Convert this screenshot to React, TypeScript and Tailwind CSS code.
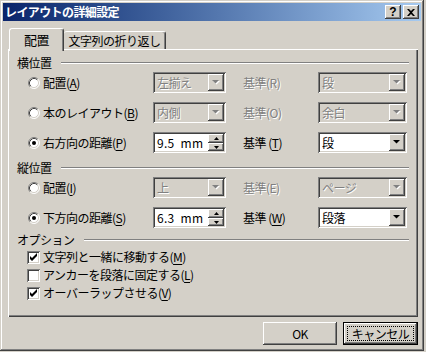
import React from "react";

const RAISED =
  "shadow-[inset_-1px_-1px_#404040,inset_1px_1px_#ffffff,inset_-2px_-2px_#808080,inset_2px_2px_#d4d0c8]";
const SUNKEN =
  "shadow-[inset_1px_1px_#808080,inset_-1px_-1px_#ffffff,inset_2px_2px_#404040,inset_-2px_-2px_#d4d0c8]";
const DIS = "text-[#808080] [text-shadow:1px_1px_0_#ffffff]";

function U({ c }: { c: string }) {
  return <span className="underline underline-offset-[2px] decoration-1">{c}</span>;
}

function Arrow({ disabled }: { disabled?: boolean }) {
  return (
    <svg width="8" height="5" viewBox="0 0 8 5" className="block">
      {disabled && <path d="M1 1h7L4.5 4.5z" fill="#ffffff" />}
      <path d="M0 0h7L3.5 3.5z" fill={disabled ? "#808080" : "#000000"} />
    </svg>
  );
}

function Combo({ value, disabled, w }: { value: string; disabled?: boolean; w: string }) {
  return (
    <div className={`relative h-[21px] ${w} ${disabled ? "bg-[#d4d0c8]" : "bg-white"} ${SUNKEN} flex items-center`}>
      <span className={`pl-[4px] leading-none ${disabled ? DIS : "text-black"}`}>{value}</span>
      <div className={`absolute right-[2px] top-[2px] w-[16px] h-[17px] bg-[#d4d0c8] ${RAISED} flex items-center justify-center`}>
        <Arrow disabled={disabled} />
      </div>
    </div>
  );
}

function Spin({ value }: { value: string }) {
  return (
    <div className={`relative h-[21px] w-[73px] bg-white ${SUNKEN} flex items-center`}>
      <span className="pl-[4px] leading-none text-black tracking-[0.3px] whitespace-pre">{value}</span>
      <div className="absolute right-[2px] top-[2px] w-[16px] h-[17px] flex flex-col">
        <div className={`h-[9px] bg-[#d4d0c8] ${RAISED} flex items-center justify-center`}>
          <svg width="5" height="3" viewBox="0 0 5 3" className="block">
            <path d="M2.5 0L5 3H0z" fill="#000" />
          </svg>
        </div>
        <div className={`h-[8px] bg-[#d4d0c8] ${RAISED} flex items-center justify-center`}>
          <svg width="5" height="3" viewBox="0 0 5 3" className="block">
            <path d="M0 0h5L2.5 3z" fill="#000" />
          </svg>
        </div>
      </div>
    </div>
  );
}

function Radio({ checked }: { checked?: boolean }) {
  return (
    <svg width="12" height="12" viewBox="0 0 12 12" className="block shrink-0">
      <circle cx="6" cy="6" r="5" fill="#ffffff" />
      <path d="M2.11 9.89A5.5 5.5 0 0 1 9.89 2.11" stroke="#808080" fill="none" />
      <path d="M9.89 2.11A5.5 5.5 0 0 1 2.11 9.89" stroke="#ffffff" fill="none" />
      <path d="M2.82 9.18A4.5 4.5 0 0 1 9.18 2.82" stroke="#404040" fill="none" />
      <path d="M9.18 2.82A4.5 4.5 0 0 1 2.82 9.18" stroke="#d4d0c8" fill="none" />
      {checked && <circle cx="6" cy="6" r="2" fill="#000000" />}
    </svg>
  );
}

function Check({ checked }: { checked?: boolean }) {
  return (
    <div className={`w-[13px] h-[13px] bg-white ${SUNKEN} shrink-0 relative`}>
      {checked && (
        <svg width="13" height="13" viewBox="0 0 13 13" className="absolute inset-0">
          <path d="M3 5v3l2 2 5-5V2L5 7z" fill="#000" />
        </svg>
      )}
    </div>
  );
}

function Header({ text }: { text: string }) {
  return (
    <div className="flex items-center h-[14px] pl-[9px] pr-[9px]">
      <span className="leading-none">{text}</span>
      <div className="flex-1 ml-[9px] h-[2px] border-t border-t-[#808080] border-b border-b-white" />
    </div>
  );
}

function Row({
  radioChecked,
  label,
  field,
  refLabel,
  refDisabled,
  combo,
}: {
  radioChecked?: boolean;
  label: React.ReactNode;
  field: React.ReactNode;
  refLabel: React.ReactNode;
  refDisabled?: boolean;
  combo: React.ReactNode;
}) {
  return (
    <div className="flex items-center h-[21px]">
      <div className="w-[145px] pl-[20px] flex items-center gap-[3px]">
        <Radio checked={radioChecked} />
        <span className="leading-none">{label}</span>
      </div>
      {field}
      <div className={`w-[92px] pl-[17px] leading-none ${refDisabled ? DIS : ""}`}>{refLabel}</div>
      {combo}
    </div>
  );
}

export default function App() {
  return (
    <div className="w-[426px] h-[352px] bg-[#d4d0c8] font-['Noto_Sans_CJK_JP',sans-serif] text-[12px] text-black tracking-[-0.5px]">
      <div className="w-[424px] h-[351px] bg-[#d4d0c8] shadow-[inset_-1px_-1px_#404040,inset_1px_1px_#d4d0c8,inset_-2px_-2px_#808080,inset_2px_2px_#ffffff] pt-[3px] flex flex-col">
        {/* title bar */}
        <div className="mx-[3px] h-[18px] bg-gradient-to-r from-[#0a246a] to-[#a6caf0] flex items-center pl-[2px] pr-[2px]">
          <span className="text-white font-bold leading-none text-[12px] tracking-[-0.6px]">レイアウトの詳細設定</span>
          <div className="ml-auto flex items-center">
            <div className={`w-[16px] h-[14px] bg-[#d4d0c8] ${RAISED} flex items-center justify-center`}>
              <span className="font-['Liberation_Sans'] font-bold text-[12px] leading-none tracking-normal text-black">?</span>
            </div>
            <div className={`ml-[2px] w-[16px] h-[14px] bg-[#d4d0c8] ${RAISED} flex items-center justify-center`}>
              <svg width="8" height="7" viewBox="0 0 8 7" className="block">
                <path d="M0 0h2l2 2 2-2h2L5 3.5 8 7H6L4 5 2 7H0l3-3.5z" fill="#000" />
              </svg>
            </div>
          </div>
        </div>

        {/* tabs + panel */}
        <div className="ml-[8px] mt-[7px] w-[410px] flex flex-col">
          <div className="h-[21px] flex items-start pl-[1px] relative z-10">
            <div className="h-[23px] w-[55px] bg-[#d4d0c8] rounded-t-[3px] border-l border-t border-l-white border-t-white border-r border-r-[#404040] shadow-[inset_-1px_0_#808080] flex items-start justify-center pt-[4px]">
              <span className="leading-none text-[13px]">配置</span>
            </div>
            <div className="mt-[3px] h-[18px] w-[102px] bg-[#d4d0c8] rounded-t-[3px] border-t border-t-white border-r border-r-[#404040] shadow-[inset_-1px_0_#808080] flex items-start justify-center pt-[3px]">
              <span className="leading-none">文字列の折り返し</span>
            </div>
          </div>
          <div className="h-[268px] shadow-[inset_1px_1px_#ffffff,inset_-1px_-1px_#404040,inset_-2px_-2px_#808080] flex flex-col pt-[7px]">
            <Header text="横位置" />
            <div className="mt-[2px]">
              <Row
                label={<>配置(<U c="A" />)</>}
                field={<Combo value="左揃え" disabled w="w-[73px]" />}
                refLabel="基準(R)"
                refDisabled
                combo={<Combo value="段" disabled w="w-[89px]" />}
              />
            </div>
            <div className="mt-[9px]">
              <Row
                label={<>本のレイアウト(<U c="B" />)</>}
                field={<Combo value="内側" disabled w="w-[73px]" />}
                refLabel="基準(O)"
                refDisabled
                combo={<Combo value="余白" disabled w="w-[89px]" />}
              />
            </div>
            <div className="mt-[9px]">
              <Row
                radioChecked
                label={<>右方向の距離(<U c="P" />)</>}
                field={<Spin value={"9.5  mm"} />}
                refLabel={<>基準 (<U c="T" />)</>}
                combo={<Combo value="段" w="w-[89px]" />}
              />
            </div>
            <div className="mt-[8px]">
              <Header text="縦位置" />
            </div>
            <div className="mt-[2px]">
              <Row
                label={<>配置(<U c="I" />)</>}
                field={<Combo value="上" disabled w="w-[73px]" />}
                refLabel="基準(E)"
                refDisabled
                combo={<Combo value="ページ" disabled w="w-[89px]" />}
              />
            </div>
            <div className="mt-[9px]">
              <Row
                radioChecked
                label={<>下方向の距離(<U c="S" />)</>}
                field={<Spin value={"6.3  mm"} />}
                refLabel={<>基準 (<U c="W" />)</>}
                combo={<Combo value="段落" w="w-[89px]" />}
              />
            </div>
            <div className="mt-[5px]">
              <Header text="オプション" />
            </div>
            <div className="mt-[1px] flex flex-col pl-[19px]">
              <div className="h-[18px] flex items-center gap-[3px]">
                <Check checked />
                <span className="leading-none">文字列と一緒に移動する(<U c="M" />)</span>
              </div>
              <div className="h-[18px] flex items-center gap-[3px]">
                <Check />
                <span className="leading-none">アンカーを段落に固定する(<U c="L" />)</span>
              </div>
              <div className="h-[18px] flex items-center gap-[3px]">
                <Check checked />
                <span className="leading-none">オーバーラップさせる(<U c="V" />)</span>
              </div>
            </div>
          </div>
        </div>

        {/* buttons */}
        <div className="mt-[5px] flex justify-end gap-[6px] pr-[6px]">
          <div className={`w-[74px] h-[23px] bg-[#d4d0c8] ${RAISED} flex items-center justify-center`}>
            <span className="leading-none">OK</span>
          </div>
          <div className="w-[75px] h-[23px] border border-black">
            <div className={`w-full h-full bg-[#d4d0c8] ${RAISED} p-[3px]`}>
              <div className="w-full h-full border border-dotted border-black flex items-center justify-center">
                <span className="leading-none">キャンセル</span>
              </div>
            </div>
          </div>
        </div>
      </div>
    </div>
  );
}
